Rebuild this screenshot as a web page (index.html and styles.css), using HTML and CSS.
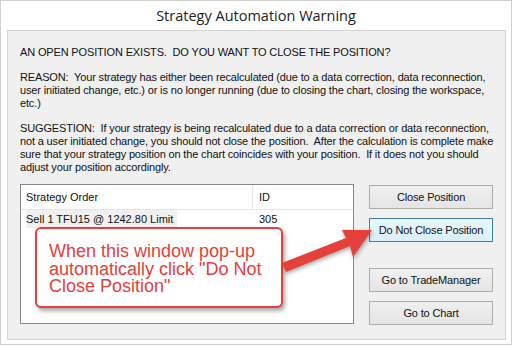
FILE: index.html
```html
<!DOCTYPE html>
<html lang="en">
<head>
    <meta charset="UTF-8">
    <title>Strategy Automation Warning</title>
    <link rel="stylesheet" href="styles.css">
</head>
<body>
    <div class="window">
        <div class="title">Strategy Automation Warning</div>

        <div class="panel">
            <p class="msg">AN OPEN POSITION EXISTS.&nbsp; DO YOU WANT TO CLOSE THE POSITION?</p>
            <p class="msg">REASON:&nbsp; Your strategy has either been recalculated (due to a data correction, data reconnection,<br>
                user initiated change, etc.) or is no longer running (due to closing the chart, closing the workspace,<br>
                etc.)</p>
            <p class="msg msg-last">SUGGESTION:&nbsp; If your strategy is being recalculated due to a data correction or data reconnection,<br>
                not a user initiated change, you should not close the position.&nbsp; After the calculation is complete make<br>
                sure that your strategy position on the chart coincides with your position.&nbsp; If it does not you should<br>
                adjust your position accordingly.</p>

            <div class="bottom">
                <div class="listbox">
                    <div class="list-head">
                        <div class="col-order">Strategy Order</div>
                        <div class="col-id">ID</div>
                    </div>
                    <div class="list-row">
                        <div class="col-order"><span class="selected">Sell 1 TFU15 @ 1242.80 Limit</span></div>
                        <div class="col-id">305</div>
                    </div>
                </div>

                <div class="buttons">
                    <button class="btn">Close Position</button>
                    <button class="btn btn-focus">Do Not Close Position</button>
                    <button class="btn btn-gap">Go to TradeManager</button>
                    <button class="btn">Go to Chart</button>
                </div>
            </div>
        </div>

        <!-- annotation drawn over the dialog -->
        <div class="callout">
            <div class="callout-line">When this window pop-up</div>
            <div class="callout-line">automatically click "Do Not</div>
            <div class="callout-line">Close Position"</div>
        </div>
        <svg class="arrow" width="100" height="60" viewBox="0 0 100 60">
            <polygon points="3,42 67,17 63,9 93,9 74,36 71,25 7,51" fill="#e5403a"/>
        </svg>
    </div>
</body>
</html>
```

FILE: styles.css
```css
:root {
    --panel-bg: #f0f0f0;
    --panel-border: #d4d4d4;
    --btn-border: #acacac;
    --callout-red: #e5403a;
}

body {
    margin: 0;
    background-color: white;
    font-family: "Liberation Sans", Arial, sans-serif;
    color: #111;
}

.window {
    position: relative;
    width: 512px;
    height: 345px;
    box-sizing: border-box;
    border: 1px solid #cfcfcf;
    background-color: white;
}

.title {
    height: 29px;
    line-height: 30px;
    text-align: center;
    font-family: "Open Sans", sans-serif;
    font-size: 14.5px;
    color: #222;
}

.panel {
    margin: 0 5px 0 6px;
    height: 310px;
    box-sizing: border-box;
    border: 1px solid var(--panel-border);
    background-color: var(--panel-bg);
    padding: 15px 0 0 12px;
}

.msg {
    margin: 0 0 12px 0;
    font-size: 11px;
    line-height: 13px;
    letter-spacing: -0.15px;
    white-space: nowrap;
}

.msg-last {
    margin-bottom: 10px;
}

.bottom {
    display: flex;
    gap: 15px;
}

.listbox {
    width: 334px;
    height: 140px;
    box-sizing: border-box;
    border: 1px solid #828790;
    background-color: white;
    font-size: 11px;
}

.list-head,
.list-row {
    display: flex;
}

.list-head {
    height: 24px;
    line-height: 24px;
    border-bottom: 1px solid #e5e5e5;
}

.list-row {
    height: 18px;
    line-height: 18px;
}

.col-order {
    width: 232px;
    padding-left: 5px;
    box-sizing: border-box;
}

.list-head .col-order {
    border-right: 1px solid #e5e5e5;
}

.col-id {
    padding-left: 6px;
}

.selected {
    display: inline-block;
    background-color: #f0f0f0;
    padding-right: 4px;
}

.buttons {
    display: flex;
    flex-direction: column;
    gap: 9px;
    padding-top: 1px;
}

.btn {
    width: 124px;
    height: 24px;
    border: 1px solid var(--btn-border);
    border-radius: 0;
    background: linear-gradient(#f0f0f0, #e5e5e5);
    font-family: "Liberation Sans", Arial, sans-serif;
    font-size: 11px;
    letter-spacing: -0.15px;
    color: #111;
    padding: 0;
}

.btn-focus {
    border-color: #3c7fb1;
    background: linear-gradient(#eaf6fd, #d9f0fc);
}

.btn-gap {
    margin-top: 17px;
}

.callout {
    position: absolute;
    left: 34px;
    top: 226px;
    width: 248px;
    height: 81px;
    box-sizing: border-box;
    border: 2px solid var(--callout-red);
    border-radius: 6px;
    background-color: white;
    box-shadow: 2px 3px 4px rgba(0, 0, 0, 0.35);
    padding: 14px 0 0 12px;
    font-family: "Liberation Sans", sans-serif;
    font-size: 18px;
    color: #e5403a;
}

.callout-line {
    height: 17.5px;
    line-height: 17.5px;
}

.arrow {
    position: absolute;
    left: 278px;
    top: 220px;
    filter: drop-shadow(1px 2px 2px rgba(0, 0, 0, 0.35));
}
```
